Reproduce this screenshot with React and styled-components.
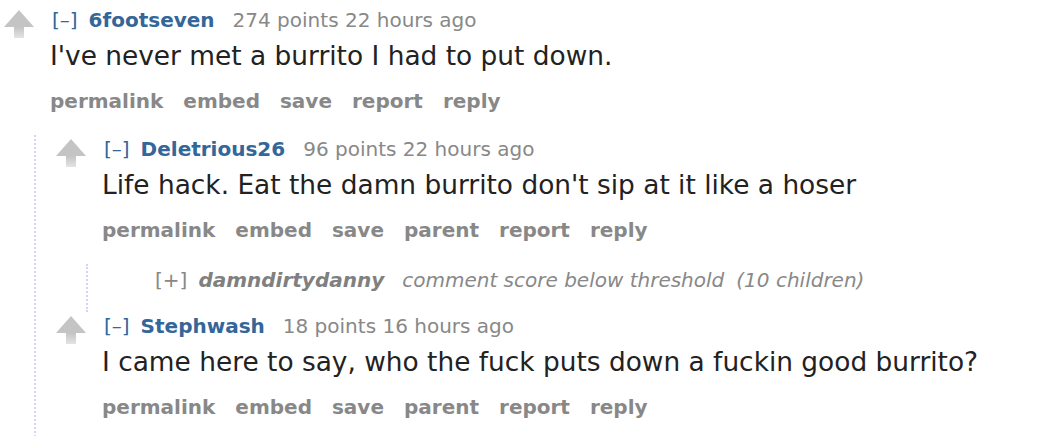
import React from "react";
import styled, { createGlobalStyle } from "styled-components";

const Global = createGlobalStyle`
  html, body { margin: 0; padding: 0; background: #fff; }
  body { font-family: "DejaVu Sans", Verdana, sans-serif; }
`;

const Page = styled.div`
  padding-top: 6px;
  width: 1060px;
  height: 436px;
  overflow: hidden;
  box-sizing: border-box;
`;

const CommentBox = styled.div`
  display: flex;
  flex-direction: column;
  padding-top: ${(p) => (p.$collapsed ? "4px" : "2px")};
  padding-left: ${(p) => (p.$top ? "4px" : "0")};
`;

const Entry = styled.div`
  display: flex;
  align-items: flex-start;
  padding-bottom: ${(p) => (p.$collapsed ? "20px" : "22px")};
`;

const MidCol = styled.div`
  width: 46px;
  flex: 0 0 46px;
  padding-top: 2px;
`;

const Body = styled.div`
  display: flex;
  flex-direction: column;
  min-width: 0;
`;

const Tagline = styled.div`
  display: flex;
  align-items: baseline;
  gap: 11px;
  font-size: 20px;
  line-height: 24px;
  color: #888;
  white-space: nowrap;
  font-style: ${(p) => (p.$collapsed ? "italic" : "normal")};
`;

const Expand = styled.span`
  color: ${(p) => (p.$collapsed ? "#888" : "#369")};
  font-style: normal;
  margin-left: ${(p) => (p.$collapsed ? "1px" : "2px")};
`;

const Author = styled.span`
  color: ${(p) => (p.$collapsed ? "#808080" : "#369")};
  font-weight: bold;
  margin-right: 7px;
`;

const Score = styled.span`
  color: #888;
`;

const Children = styled.span`
  margin-left: 12px;
`;

const Text = styled.div`
  margin-top: 9px;
  font-size: 26.4px;
  line-height: 30px;
  color: #222;
  white-space: nowrap;
`;

const Buttons = styled.ul`
  display: flex;
  gap: 20px;
  list-style: none;
  margin: 18px 0 0;
  padding: 0;
  font-size: 20px;
  line-height: 24px;
  font-weight: bold;
  color: #888;
`;

const Child = styled.div`
  margin-left: 30px;
  border-left: 2px dotted #d4d4fa;
  padding-left: 20px;
  display: flex;
  flex-direction: column;
`;

const Arrow = () => (
  <svg width="30" height="28" viewBox="0 0 30 28">
    <defs>
      <linearGradient id="shaft" x1="0" y1="0" x2="0" y2="1">
        <stop offset="0" stopColor="#c4c4c4" />
        <stop offset="1" stopColor="#e4e4e4" />
      </linearGradient>
    </defs>
    <polygon points="15,0 30,17 0,17" fill="#c4c4c4" />
    <rect x="10" y="17" width="10" height="11" fill="url(#shaft)" />
  </svg>
);

function Comment({ author, score, time, text, buttons, top, children }) {
  return (
    <CommentBox $top={top}>
      <Entry>
        <MidCol>
          <Arrow />
        </MidCol>
        <Body>
          <Tagline>
            <Expand>[–]</Expand>
            <Author>{author}</Author>
            <Score>
              {score} points {time}
            </Score>
          </Tagline>
          <Text>{text}</Text>
          <Buttons>
            {buttons.map((b) => (
              <li key={b}>{b}</li>
            ))}
          </Buttons>
        </Body>
      </Entry>
      {children && <Child>{children}</Child>}
    </CommentBox>
  );
}

function Collapsed({ author, note, kids }) {
  return (
    <CommentBox $collapsed>
      <Entry $collapsed>
        <MidCol />
        <Body>
          <Tagline $collapsed>
            <Expand $collapsed>[+]</Expand>
            <Author $collapsed>{author}</Author>
            <span>
              {note}
              <Children>({kids} children)</Children>
            </span>
          </Tagline>
        </Body>
      </Entry>
    </CommentBox>
  );
}

export default function App() {
  return (
    <>
      <Global />
      <Page>
        <Comment
          top
          author="6footseven"
          score="274"
          time="22 hours ago"
          text="I've never met a burrito I had to put down."
          buttons={["permalink", "embed", "save", "report", "reply"]}
        >
          <Comment
            author="Deletrious26"
            score="96"
            time="22 hours ago"
            text="Life hack. Eat the damn burrito don't sip at it like a hoser"
            buttons={["permalink", "embed", "save", "parent", "report", "reply"]}
          >
            <Collapsed
              author="damndirtydanny"
              note="comment score below threshold"
              kids="10"
            />
          </Comment>
          <Comment
            author="Stephwash"
            score="18"
            time="16 hours ago"
            text="I came here to say, who the fuck puts down a fuckin good burrito?"
            buttons={["permalink", "embed", "save", "parent", "report", "reply"]}
          />
        </Comment>
      </Page>
    </>
  );
}
